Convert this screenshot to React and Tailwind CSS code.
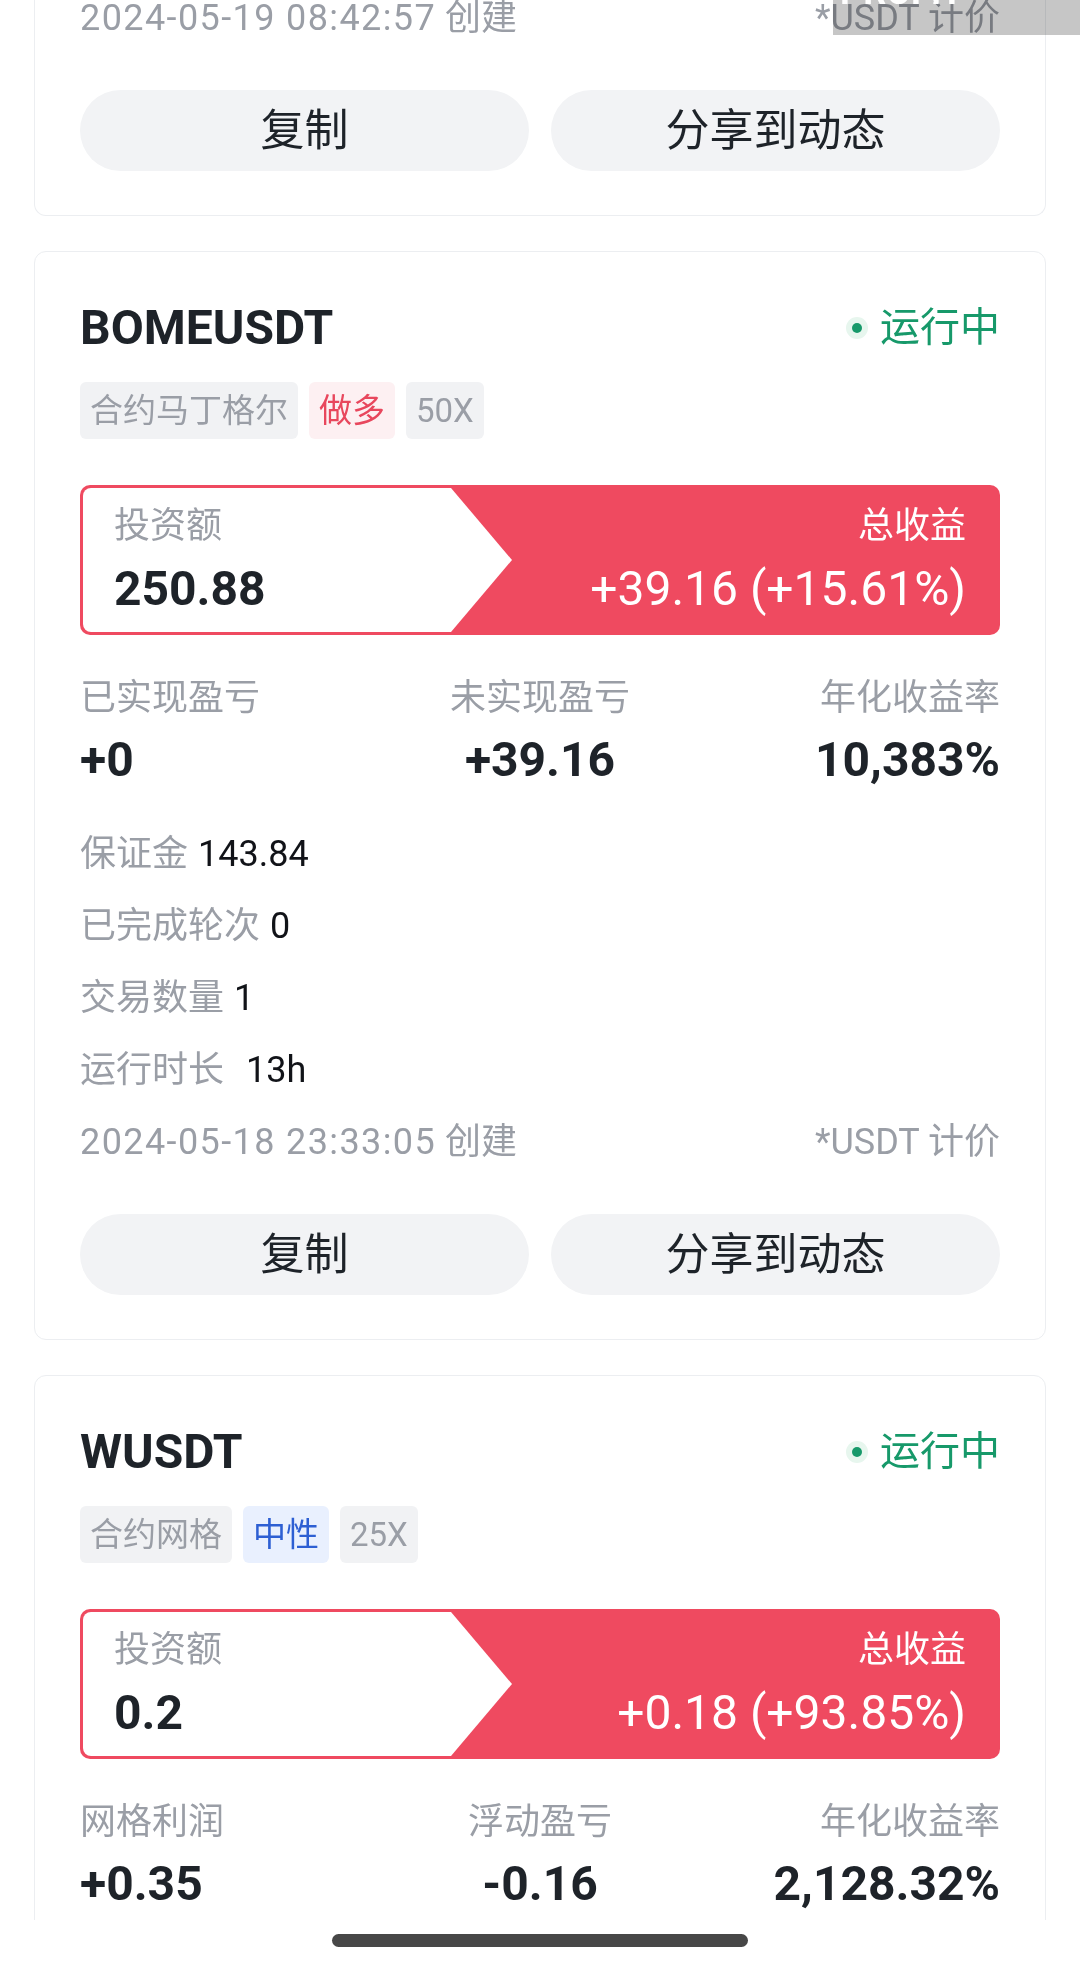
const FONT = "font-[Roboto,'Noto_Sans_CJK_SC',sans-serif]";

const cards = [
  {
    name: "BOMEUSDT",
    tags: [
      { text: "合约马丁格尔", tone: "gray" },
      { text: "做多", tone: "red" },
      { text: "50X", tone: "gray" },
    ],
    invest: "250.88",
    profit: "+39.16 (+15.61%)",
    stats: [
      { label: "已实现盈亏", value: "+0" },
      { label: "未实现盈亏", value: "+39.16" },
      { label: "年化收益率", value: "10,383%" },
    ],
    details: [
      { label: "保证金", value: "143.84" },
      { label: "已完成轮次", value: "0" },
      { label: "交易数量", value: "1" },
      { label: "运行时长", value: "13h", wide: true },
    ],
    date: "2024-05-18 23:33:05",
  },
  {
    name: "WUSDT",
    tags: [
      { text: "合约网格", tone: "gray" },
      { text: "中性", tone: "blue" },
      { text: "25X", tone: "gray" },
    ],
    invest: "0.2",
    profit: "+0.18 (+93.85%)",
    stats: [
      { label: "网格利润", value: "+0.35" },
      { label: "浮动盈亏", value: "-0.16" },
      { label: "年化收益率", value: "2,128.32%" },
    ],
  },
];

const tagTone = {
  gray: "bg-[#f1f2f4] text-[#9a9ea6]",
  red: "bg-[#fdf0f2] text-[#e8475d]",
  blue: "bg-[#e9f0fe] text-[#2d5fd3]",
};

function DateRow({ date }) {
  return (
    <div className="flex h-[44px] items-center justify-between text-[36px] leading-[44px] text-[#9a9ea6]">
      <span>
        <span className="tracking-[1.4px]">{date}</span> 创建
      </span>
      <span>*USDT 计价</span>
    </div>
  );
}

function Buttons() {
  return (
    <div className="mt-[50px] grid grid-cols-2 gap-[22px]">
      <button className="h-[81px] rounded-full bg-[#f2f3f5] text-[44px] text-[#1e2329]">
        复制
      </button>
      <button className="h-[81px] rounded-full bg-[#f2f3f5] text-[44px] text-[#1e2329]">
        分享到动态
      </button>
    </div>
  );
}

function BotCard({ card, last }) {
  return (
    <div
      className={`mt-[35px] rounded-[12px] border border-[#eceef1] px-[45px] pt-[46px] ${
        last ? "pb-[400px]" : "pb-[44px]"
      }`}
    >
      <div className="flex h-[60px] items-center justify-between">
        <span className="text-[48px] font-bold text-[#1e2329]">{card.name}</span>
        <div className="flex items-center gap-[12px]">
          <span className="flex h-[22px] w-[22px] items-center justify-center rounded-full bg-[#e7f6ee]">
            <span className="h-[10px] w-[10px] rounded-full bg-[#17996a]" />
          </span>
          <span className="text-[40px] text-[#17996a]">运行中</span>
        </div>
      </div>

      <div className="mt-[24px] flex gap-[11px]">
        {card.tags.map((t) => (
          <span
            key={t.text}
            className={`flex h-[57px] items-center rounded-[6px] px-[10px] text-[33px] ${tagTone[t.tone]}`}
          >
            {t.text}
          </span>
        ))}
      </div>

      <div className="mt-[46px] flex h-[150px] rounded-[10px] bg-[#ef4a60] p-[3px]">
        <div className="flex w-[429px] flex-col rounded-l-[8px] bg-white pl-[31px] pt-[16px] [clip-path:polygon(0_0,368px_0,100%_50%,368px_100%,0_100%)]">
          <span className="h-[44px] text-[36px] leading-[44px] text-[#9a9ea6]">投资额</span>
          <span className="mt-[13px] h-[56px] text-[48px] font-bold leading-[56px] text-[#1e2329]">
            {card.invest}
          </span>
        </div>
        <div className="flex flex-1 flex-col items-end pr-[31px] pt-[16px] text-white">
          <span className="h-[44px] text-[36px] leading-[44px]">总收益</span>
          <span className="mt-[13px] h-[56px] text-[48px] leading-[56px]">{card.profit}</span>
        </div>
      </div>

      <div className="mt-[41px] grid grid-cols-3">
        {card.stats.map((s, i) => (
          <div
            key={s.label}
            className={`flex flex-col ${
              i === 0 ? "items-start" : i === 1 ? "items-center" : "items-end"
            }`}
          >
            <span className="h-[44px] text-[36px] leading-[44px] text-[#9a9ea6]">{s.label}</span>
            <span className="mt-[12px] h-[56px] text-[48px] font-bold leading-[56px] text-[#1e2329]">
              {s.value}
            </span>
          </div>
        ))}
      </div>

      {card.details && (
        <div className="mt-[44px] flex flex-col gap-[28px]">
          {card.details.map((d) => (
            <div key={d.label} className="flex h-[44px] items-center text-[36px] leading-[44px]">
              <span className="text-[#9a9ea6]">{d.label}</span>
              <span className={`${d.wide ? "ml-[22px]" : "ml-[10px]"} text-[#111318]`}>{d.value}</span>
            </div>
          ))}
          <DateRow date={card.date} />
        </div>
      )}

      {card.details && <Buttons />}
    </div>
  );
}

export default function App() {
  return (
    <div className={`relative flex h-[1964px] w-[1080px] flex-col overflow-hidden bg-white ${FONT}`}>
      <div className="flex-1 overflow-hidden px-[34px]">
        <div className="-mt-[4px] rounded-b-[12px] border-x border-b border-[#eceef1] px-[45px] pb-[44px]">
          <DateRow date="2024-05-19 08:42:57" />
          <Buttons />
        </div>

        {cards.map((c, i) => (
          <BotCard key={c.name} card={c} last={i === cards.length - 1} />
        ))}
      </div>

      <div className="flex h-[44px] justify-center pt-[14px]">
        <div className="h-[13px] w-[416px] rounded-full bg-[#474747]" />
      </div>

      {/* floating overlay cut off at the top right */}
      <div className="absolute right-0 top-0 h-[35px] w-[247px] bg-[#c6c6c6] mix-blend-multiply" />
      <div className="absolute right-[40px] top-0 h-[6px] w-[200px] overflow-hidden">
        <span className="-mt-[26px] block text-[36px] font-bold leading-[36px] text-white">PROFIT USD</span>
      </div>
    </div>
  );
}
